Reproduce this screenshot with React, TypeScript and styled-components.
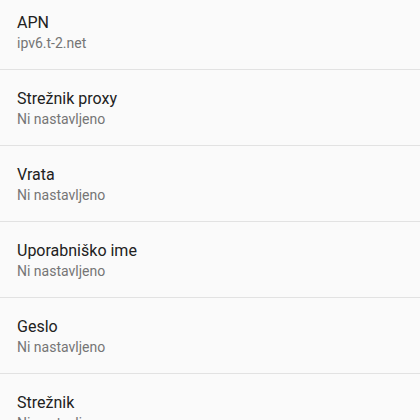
import React from 'react';
import styled, { createGlobalStyle } from 'styled-components';

const GlobalStyle = createGlobalStyle`
  html, body {
    margin: 0;
    padding: 0;
    background-color: #fafafa;
  }

  body {
    font-family: Roboto, 'Noto Sans', sans-serif;
    -webkit-font-smoothing: antialiased;
  }
`;

const Screen = styled.div`
  width: 420px;
  height: 420px;
  overflow: hidden;
  background-color: #fafafa;
`;

const List = styled.ul`
  list-style: none;
  margin: -6px 0 0;
  padding: 0;
  display: flex;
  flex-direction: column;
`;

const Row = styled.li`
  display: flex;
  flex-direction: column;
  justify-content: flex-start;
  height: 75px;
  box-sizing: content-box;
  padding: 0 17px;
  border-bottom: 1px solid #e2e2e2;
  cursor: pointer;
`;

const Title = styled.span`
  padding-top: 19px;
  font-size: 16px;
  line-height: 20px;
  color: #212121;
  white-space: nowrap;
`;

const Summary = styled.span`
  font-size: 14px;
  line-height: 20px;
  color: #757575;
  white-space: nowrap;
`;

type Setting = {
  title: string;
  summary: string;
};

const settings: Setting[] = [
  { title: 'APN', summary: 'ipv6.t-2.net' },
  { title: 'Strežnik proxy', summary: 'Ni nastavljeno' },
  { title: 'Vrata', summary: 'Ni nastavljeno' },
  { title: 'Uporabniško ime', summary: 'Ni nastavljeno' },
  { title: 'Geslo', summary: 'Ni nastavljeno' },
  { title: 'Strežnik', summary: 'Ni nastavljeno' },
];

const App: React.FC = () => {
  return (
    <Screen>
      <GlobalStyle />
      <List>
        {settings.map(item => (
          <Row key={item.title}>
            <Title>{item.title}</Title>
            <Summary>{item.summary}</Summary>
          </Row>
        ))}
      </List>
    </Screen>
  );
};

export default App;
